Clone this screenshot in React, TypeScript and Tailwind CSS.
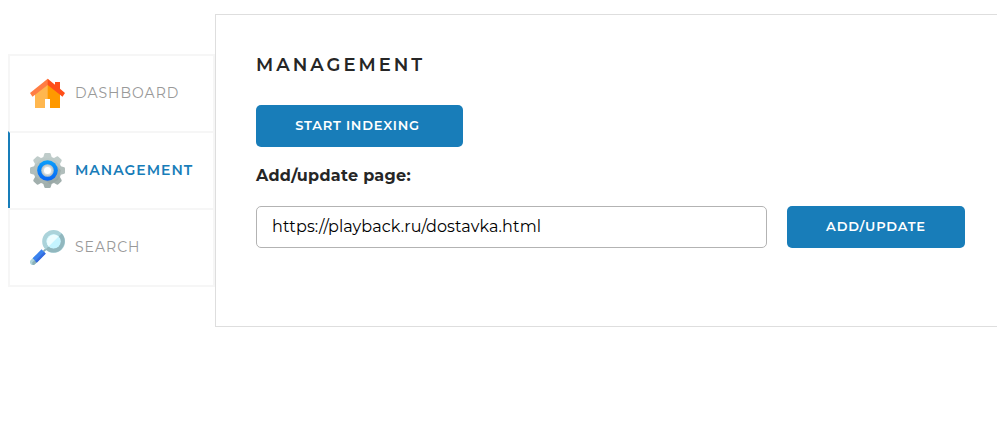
import type { ReactNode } from 'react';

function HouseIcon() {
  return (
    <svg width="35" height="35" viewBox="0 0 35 35">
      <path d="M5 17L17.7 6L20 16V23H15V32H5Z" fill="#ffb74f" />
      <path d="M17.7 6L30 17V32H20V23H17.7Z" fill="#ff9900" />
      <path d="M17.7 2.8L0 17L2.5 20.7L17.7 9L20 7Z" fill="#ff7d43" />
      <path d="M17.7 2.8L25 8.8V6H30V12.8L35 17L32.5 20.7L17.7 9Z" fill="#ff4f19" />
    </svg>
  );
}

const teeth = [0, 45, 90, 135, 180, 225, 270, 315];

function GearIcon() {
  return (
    <svg width="35" height="35" viewBox="0 0 35 35">
      <defs>
        <linearGradient id="gear" x1="0" y1="0" x2="0" y2="35" gradientUnits="userSpaceOnUse">
          <stop offset="0" stopColor="#c2cfcd" />
          <stop offset="1" stopColor="#9fadab" />
        </linearGradient>
        <linearGradient id="ring" x1="0" y1="0" x2="0" y2="1">
          <stop offset="0" stopColor="#0aa0fb" />
          <stop offset="1" stopColor="#0864f5" />
        </linearGradient>
      </defs>
      <circle cx="17.5" cy="17.5" r="14" fill="url(#gear)" />
      {teeth.map((a) => (
        <path
          key={a}
          d="M13 5L14.3 0.7Q14.6 0 15.4 0H19.6Q20.4 0 20.7 0.7L22 5Z"
          transform={`rotate(${a} 17.5 17.5)`}
          fill={a > 90 && a < 270 ? '#a1afad' : a === 90 || a === 270 ? '#b1bebc' : '#bfccca'}
        />
      ))}
      <path d="M24.5 10.5L31 17.5L28 27L20 31L10.5 24.5Z" fill="#899896" opacity=".4" />
      <circle cx="17.5" cy="17.5" r="10.3" fill="url(#ring)" />
      <circle cx="17.5" cy="17.5" r="6.3" fill="#b9c4c9" />
      <circle cx="17.5" cy="17.5" r="5.1" fill="#d4dadc" />
      <circle cx="17.5" cy="17.5" r="3.5" fill="#fff" />
    </svg>
  );
}

function SearchIcon() {
  return (
    <svg width="35" height="35" viewBox="0 0 35 35">
      <path d="M13.3 21.7L17.2 17.8" stroke="#8aafb6" strokeWidth="1.8" />
      <path d="M2.9 32.1L7 28" stroke="#aed4da" strokeWidth="5.8" strokeLinecap="round" />
      <path d="M2.5 34.8Q4 35.2 5.2 34L8.6 30.4L6.8 28L2.2 32.6Z" fill="#8cb1b8" />
      <path d="M4.7 30.3L13.6 21.4" stroke="#3a82ee" strokeWidth="5.8" />
      <path d="M6 31.8L14.9 22.9" stroke="#356bde" strokeWidth="2.4" />
      <circle cx="23.6" cy="11.4" r="9.2" fill="none" stroke="#abd3da" strokeWidth="4.4" />
      <path d="M30.1 4.9A9.2 9.2 0 0 1 17.1 17.9" fill="none" stroke="#91b7be" strokeWidth="4.4" />
      <circle cx="23.6" cy="11.4" r="7.1" fill="#c4f4ff" />
      <path d="M28.6 6.4A7.1 7.1 0 0 0 18.6 16.4Z" fill="#edfdff" />
    </svg>
  );
}

function NavItem({ icon, active, children }: { icon: ReactNode; active?: boolean; children: ReactNode }) {
  return (
    <a
      href="#"
      className={`flex h-[77px] items-center gap-[10px] border-t-2 border-l-2 border-t-[#f6f6f6] pl-5 text-[14px] leading-none ${
        active ? 'border-l-[#187db9] font-semibold text-[#187db9]' : 'border-l-[#f6f6f6] font-normal text-[#999999]'
      }`}
    >
      {icon}
      <span className="pb-[2px] tracking-[1px]">{children}</span>
    </a>
  );
}

export default function App() {
  return (
    <div className="flex h-[430px] w-[997px] items-start overflow-hidden bg-white pl-2 font-['Montserrat','Inter',sans-serif] text-[#262626]">
      <nav className="mt-[54px] w-[207px] shrink-0 border-r-2 border-b-2 border-[#f6f6f6]">
        <NavItem icon={<HouseIcon />}>DASHBOARD</NavItem>
        <NavItem icon={<GearIcon />} active>MANAGEMENT</NavItem>
        <NavItem icon={<SearchIcon />}>SEARCH</NavItem>
      </nav>
      <main className="mt-[14px] h-[313px] min-w-0 flex-1 border border-r-0 border-[#dedede] pl-10 pr-8">
        <h1 className="mt-[38px] text-[18px] leading-6 font-semibold tracking-[3px]">MANAGEMENT</h1>
        <button className="mt-7 block h-[42px] w-[207px] rounded-[5px] bg-[#187db9] pr-1 text-[13px] font-semibold tracking-[0.8px] text-white">
          START INDEXING
        </button>
        <label htmlFor="page" className="mt-[17px] block text-[16px] leading-6 font-bold tracking-[0.3px]">Add/update page:</label>
        <div className="mt-[18px] flex gap-5">
          <input
            id="page"
            defaultValue="https://playback.ru/dostavka.html"
            className="h-[42px] w-[511px] rounded-[5px] border border-[#b3b3b3] px-[15px] pb-[2px] text-[16px] tracking-[0.12px] text-black"
          />
          <button className="h-[42px] w-[178px] rounded-[5px] bg-[#187db9] text-[13px] font-semibold tracking-[0.8px] text-white">
            ADD/UPDATE
          </button>
        </div>
      </main>
    </div>
  );
}
